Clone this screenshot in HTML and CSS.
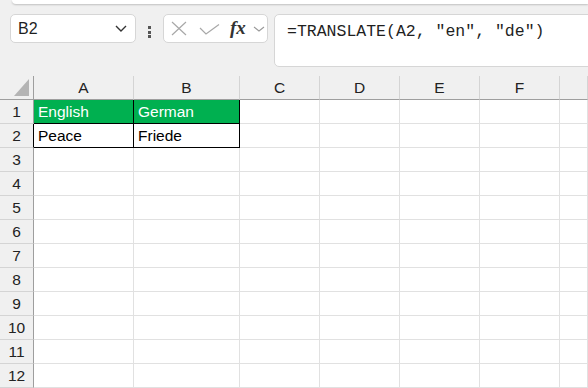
FILE: index.html
```html
<!DOCTYPE html>
<html lang="en">
<head>
    <meta charset="UTF-8">
    <meta name="viewport" content="width=device-width, initial-scale=1.0">
    <title>Translate Sheet</title>
    <link rel="stylesheet" href="styles.css">
</head>
<body>

    <div class="topbar"></div>

    <!-- Formula bar -->
    <div class="formula-row">
        <div class="name-box">
            <span>B2</span>
            <svg width="12" height="7" viewBox="0 0 12 7"><path d="M1 1 L6 6 L11 1" fill="none" stroke="#333" stroke-width="1.4"/></svg>
        </div>
        <div class="dots"><i></i><i></i><i></i></div>
        <div class="fx-box">
            <svg class="icon-x" width="16" height="15" viewBox="0 0 16 15"><path d="M1 1 L15 14 M15 1 L1 14" fill="none" stroke="#a8a8a8" stroke-width="1.2"/></svg>
            <svg class="icon-check" width="21" height="11" viewBox="0 0 21 11"><path d="M1 4 L7 10 L20 0.5" fill="none" stroke="#a8a8a8" stroke-width="1.2"/></svg>
            <span class="fx">fx</span>
            <svg width="12" height="6" viewBox="0 0 12 6"><path d="M1 1 L6 5 L11 1" fill="none" stroke="#999" stroke-width="1.1"/></svg>
        </div>
        <div class="formula-box">=TRANSLATE(A2, "en", "de")</div>
    </div>

    <!-- Grid -->
    <div class="sheet" id="sheet">
        <div class="corner">
            <svg width="16" height="17" viewBox="0 0 16 17"><path d="M15 0 L15 17 L0 17 Z" fill="#b4b4b4"/></svg>
        </div>
    </div>

    <script>
        const sheet = document.getElementById('sheet');
        const cols = ['A', 'B', 'C', 'D', 'E', 'F', ''];
        const data = {
            'A1': 'English', 'B1': 'German',
            'A2': 'Peace', 'B2': 'Friede'
        };

        cols.forEach(c => {
            const h = document.createElement('div');
            h.className = 'col-head';
            h.textContent = c;
            sheet.appendChild(h);
        });

        for (let r = 1; r <= 12; r++) {
            const rh = document.createElement('div');
            rh.className = 'row-head' + (r === 2 ? ' edge' : '');
            rh.textContent = r;
            sheet.appendChild(rh);

            cols.forEach(c => {
                const cell = document.createElement('div');
                cell.className = 'cell';
                const key = c + r;
                if (r <= 2 && (c === 'A' || c === 'B')) {
                    cell.classList.add('boxed');
                    if (r === 1) cell.classList.add('head-fill');
                }
                if (data[key]) cell.textContent = data[key];
                sheet.appendChild(cell);
            });
        }
    </script>

</body>
</html>
```

FILE: styles.css
```css
body {
    margin: 0;
    width: 588px;
    height: 388px;
    overflow: hidden;
    background-color: #f0f0f0;
    font-family: "Liberation Sans", Arial, sans-serif;
    color: #222;
}

.topbar {
    height: 4px;
    margin-left: 12px;
    background-color: #fff;
    border-bottom-left-radius: 6px;
    box-shadow: 0 1px 2px rgba(0, 0, 0, 0.2);
}

.formula-row {
    display: flex;
    align-items: flex-start;
    margin-top: 10px;
    padding-left: 10px;
}

.name-box {
    width: 126px;
    height: 29px;
    box-sizing: border-box;
    display: flex;
    align-items: center;
    justify-content: space-between;
    padding: 0 8px 0 7px;
    background-color: #fff;
    border: 1px solid #d6d6d6;
    border-radius: 5px;
    font-size: 16px;
    color: #1f1f1f;
}

.dots {
    display: flex;
    flex-direction: column;
    gap: 1.5px;
    margin: 12px 12px 0 12px;
}

.dots i {
    display: block;
    width: 3px;
    height: 3px;
    background-color: #555;
}

.fx-box {
    width: 105px;
    height: 29px;
    box-sizing: border-box;
    display: flex;
    align-items: center;
    padding-left: 7px;
    background-color: #fff;
    border: 1px solid #d6d6d6;
    border-radius: 5px;
}

.icon-x {
    margin-right: 12px;
}

.icon-check {
    margin-right: 10px;
    margin-top: 1px;
}

.fx {
    font-family: "Liberation Serif", "Times New Roman", serif;
    font-style: italic;
    font-weight: bold;
    font-size: 19px;
    color: #333;
    margin-right: 7px;
    margin-top: -2px;
}

.formula-box {
    flex: 1;
    height: 53px;
    box-sizing: border-box;
    margin-left: 6px;
    margin-right: -10px;
    padding: 7px 0 0 12px;
    background-color: #fff;
    border: 1px solid #d6d6d6;
    border-radius: 5px;
    font-family: "Liberation Mono", "Courier New", monospace;
    font-size: 16.5px;
    color: #1f1f1f;
}

.sheet {
    display: grid;
    grid-template-columns: 34px 100px 106px 80px 80px 80px 80px 1fr;
    grid-auto-rows: 24px;
    margin-top: 9px;
    font-size: 15.5px;
}

.corner,
.col-head,
.row-head,
.cell {
    box-sizing: border-box;
    line-height: 23px;
}

.corner {
    display: flex;
    align-items: flex-end;
    justify-content: flex-end;
    padding: 0 3px 3px 0;
    border-right: 1px solid #9e9e9e;
    border-bottom: 1px solid #9e9e9e;
}

.corner svg {
    display: block;
}

.col-head {
    text-align: center;
    border-right: 1px solid #d4d4d4;
    border-bottom: 1px solid #9e9e9e;
}

.row-head {
    text-align: center;
    border-right: 1px solid #9e9e9e;
    border-bottom: 1px solid #d4d4d4;
}

.row-head.edge {
    border-right-color: #000;
}

.cell {
    background-color: #fff;
    border-right: 1px solid #e1e1e1;
    border-bottom: 1px solid #e1e1e1;
    padding-left: 4px;
    white-space: nowrap;
    overflow: hidden;
    color: #000;
}

.cell.boxed {
    border-right-color: #000;
    border-bottom-color: #000;
}

.cell.head-fill {
    background-color: #00b050;
    color: #fff;
}
```
